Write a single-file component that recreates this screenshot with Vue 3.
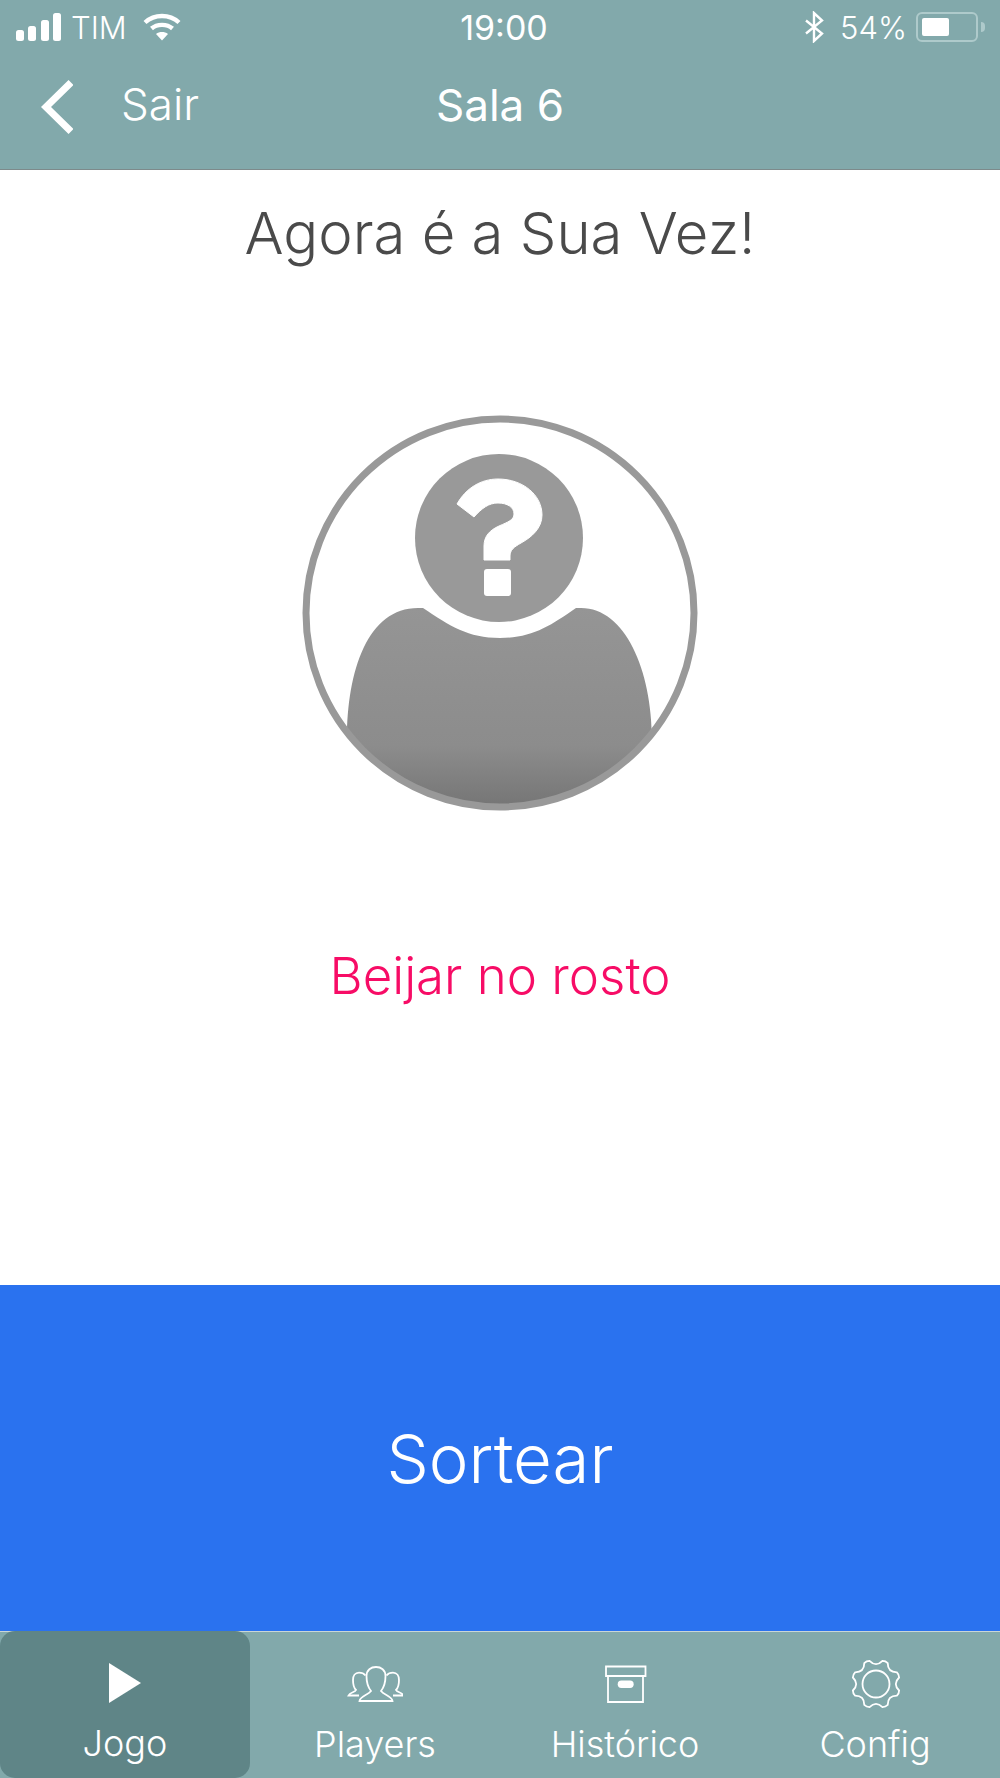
<template>
  <div class="screen">
    <header class="top">
      <div class="status">
        <div class="status__left">
          <svg class="signal" width="46" height="28" viewBox="0 0 46 28" fill="#fff">
            <rect x="0" y="17" width="8" height="11" rx="2.5" />
            <rect x="12" y="13" width="8" height="15" rx="2.5" />
            <rect x="25" y="7" width="8" height="21" rx="2.5" />
            <rect x="37" y="0" width="8" height="28" rx="2.5" />
          </svg>
          <span class="carrier">TIM</span>
          <svg class="wifi" width="38" height="28" viewBox="0 0 38 28" fill="none" stroke="#fff" stroke-width="4.4">
            <path d="M2 9.5C11.5 .8 26.5 .8 36 9.5" />
            <path d="M8.5 15.5C14 10.6 24 10.6 29.5 15.5" />
            <path d="M13 21L19 27.5 25 21C21.5 18.4 16.5 18.4 13 21Z" fill="#fff" stroke="none" />
          </svg>
        </div>
        <span class="time">19:00</span>
        <div class="status__right">
          <svg class="bt" width="20" height="32" viewBox="0 0 20 32" fill="none" stroke="#fff" stroke-width="2.4">
            <path d="M2 9.5L18 22.5 10 30V2L18 9.5 2 22.5" />
          </svg>
          <span class="battery-text">54%</span>
          <div class="battery">
            <div class="battery__fill" :style="{ width: battery + '%' }"></div>
          </div>
          <div class="battery__tip"></div>
        </div>
      </div>
      <div class="nav">
        <div class="nav__back">
          <svg width="34" height="64" viewBox="0 0 34 64" fill="none" stroke="#fff" stroke-width="7">
            <path d="M32 10.5L7 35 32 59.5" />
          </svg>
          <span>Sair</span>
        </div>
        <h1>Sala 6</h1>
      </div>
    </header>

    <main class="game">
      <h2>Agora é a Sua Vez!</h2>
      <svg class="avatar" width="420" height="420" viewBox="0 0 420 420">
        <defs>
          <linearGradient id="bodyFill" x1="0" y1="208" x2="0" y2="405" gradientUnits="userSpaceOnUse">
            <stop offset="0" stop-color="#959595" />
            <stop offset="0.7" stop-color="#8c8c8c" />
            <stop offset="1" stop-color="#767676" />
          </linearGradient>
          <clipPath id="ring"><circle cx="210" cy="213" r="195" /></clipPath>
        </defs>
        <g clip-path="url(#ring)">
          <path
            d="M57 340C57 270 78 208 128 208H133C160 226 178 238 210 238C242 238 260 226 286 208H291C335 208 362 270 362 340V420H57Z"
            fill="url(#bodyFill)"
          />
        </g>
        <circle cx="210" cy="213" r="194" fill="none" stroke="#999" stroke-width="7" />
        <circle cx="209" cy="138" r="84" fill="#999" />
        <path
          d="M167 104C176 88 191 79 208 79C233 79 252 95 252 115C252 128 242 137 231 143C224 147 220 150 220 156V160H194V146C194 136 200 130 209 126C218 122 224 120 224 114C224 107 217 103 208 103C199 103 192 108 184 117Z"
          fill="#fff"
          stroke="#fff"
          stroke-width="1"
          stroke-linejoin="round"
        />
        <rect x="194" y="169" width="27" height="27" rx="3" fill="#fff" />
      </svg>
      <p class="prompt">Beijar no rosto</p>
    </main>

    <button class="draw">Sortear</button>

    <nav class="tabs">
      <div v-for="tab in tabs" :key="tab.label" class="tab" :class="{ 'tab--on': tab.active }">
        <svg width="56" height="56" viewBox="0 0 56 56" fill="none" stroke="#fff" stroke-width="1.8">
          <template v-if="tab.icon === 'play'">
            <path d="M12 11L44 31 12 51Z" fill="#fff" stroke="none" />
          </template>
          <template v-else-if="tab.icon === 'players'">
            <path d="M12.5 48C13 43 21 42 24 38C20 33 19.5 28 19.5 23C19.5 17 24 14 29 14C34 14 38.5 17 38.5 23C38.5 28 38 33 34 38C37 42 45 43 45.5 48Z" />
            <path d="M18.5 22.5C17 20.7 15 19.7 12 19.7C8 19.7 6 23 6 27C6 31 7 35 9 37C8 39.5 3 39 1.5 42.5H12M39.5 22.5C41 20.7 43 19.7 46 19.7C50 19.7 52 23 52 27C52 31 51 35 49 37C50 39.5 55 39 56.5 42.5H46" />
          </template>
          <template v-else-if="tab.icon === 'archive'">
            <path d="M9 13.5H48.5V23H9ZM11 23H46V49H11Z" />
            <rect x="20.7" y="27.5" width="16" height="7.5" rx="3.7" fill="#fff" stroke="none" />
          </template>
          <template v-else>
            <path :d="gearPath" />
            <circle cx="29" cy="31" r="13.5" />
          </template>
        </svg>
        <span>{{ tab.label }}</span>
      </div>
    </nav>
  </div>
</template>

<script setup>
const battery = 54

const tabs = [
  { label: 'Jogo', icon: 'play', active: true },
  { label: 'Players', icon: 'players' },
  { label: 'Histórico', icon: 'archive' },
  { label: 'Config', icon: 'gear' }
]

// 8 teeth, built around the centre so the arcs stay even
const gearPath = (() => {
  const pts = []
  const n = 8
  const step = Math.PI / n
  const p = (r, t) => `${(29 + r * Math.cos(t)).toFixed(1)} ${(31 + r * Math.sin(t)).toFixed(1)}`
  for (let i = 0; i < n; i++) {
    const a = (i / n) * Math.PI * 2 - Math.PI / 2 + step
    pts.push(`${i === 0 ? 'M' : 'L'}${p(24, a - step * 0.3)}`)
    pts.push(`Q${p(25, a)} ${p(24, a + step * 0.3)}`)
    pts.push(`Q${p(16.5, a + step)} ${p(24, a + step * 1.7)}`)
  }
  return pts.join(' ') + 'Z'
})()
</script>

<style scoped>
.screen {
  width: 1000px;
  height: 1778px;
  display: flex;
  flex-direction: column;
  background: #fff;
  overflow: hidden;
  font-family: Inter, "Liberation Sans", sans-serif;
  color: #fff;
}

.top {
  height: 170px;
  box-sizing: border-box;
  flex: none;
  background: #82a9ab;
  border-bottom: 1px solid #7d8a8b;
}

.status {
  height: 54px;
  padding: 0 0 0 16px;
  display: grid;
  grid-template-columns: 1fr auto 1fr;
  align-items: center;
  font-size: 31px;
  font-weight: 300;
}

.status__left {
  display: flex;
  align-items: center;
}

.carrier {
  margin-left: 9px;
}

.wifi {
  margin-left: 16px;
}

.time {
  font-size: 34px;
  font-weight: 400;
  margin-right: 8px;
}

.status__right {
  display: flex;
  align-items: center;
  justify-content: flex-end;
  padding-right: 15px;
}

.battery-text {
  margin-left: 16px;
}

.battery {
  width: 62px;
  height: 30px;
  margin-left: 9px;
  padding: 4px;
  box-sizing: border-box;
  border: 2px solid #aecacb;
  border-radius: 6px;
}

.battery__fill {
  height: 100%;
  background: #fff;
  border-radius: 2px;
}

.battery__tip {
  width: 4px;
  height: 10px;
  margin-left: 3px;
  background: #aecacb;
  border-radius: 0 4px 4px 0;
}

.nav {
  position: relative;
  height: 116px;
  display: flex;
  align-items: flex-start;
  justify-content: center;
}

.nav h1 {
  margin: 26px 0 0;
  font-size: 44px;
  line-height: 50px;
  font-weight: 400;
}

.nav__back {
  position: absolute;
  left: 39px;
  top: 18px;
  display: flex;
  align-items: center;
  gap: 48px;
  font-size: 44px;
  font-weight: 300;
}

.game {
  flex: 1;
  display: flex;
  flex-direction: column;
  align-items: center;
}

.game h2 {
  margin: 26px 0 0;
  font-size: 58px;
  line-height: 74px;
  font-weight: 300;
  color: #4a4a4a;
}

.avatar {
  display: block;
  margin-top: 130px;
}

.prompt {
  margin: 126px 0 0;
  font-size: 51px;
  line-height: 60px;
  font-weight: 300;
  color: #f70c66;
}

.draw {
  flex: none;
  height: 346px;
  width: 100%;
  padding: 0;
  border: 0;
  background: #2a72ef;
  color: #fff;
  font: 300 67px Inter, "Liberation Sans", sans-serif;
}

.tabs {
  flex: none;
  height: 147px;
  box-sizing: border-box;
  display: grid;
  grid-template-columns: repeat(4, 1fr);
  background: #82a9ab;
  border-top: 1px solid #c9d6d7;
}

.tab {
  display: flex;
  flex-direction: column;
  align-items: center;
  padding-top: 21px;
  font-size: 36px;
  font-weight: 300;
  border-radius: 15px;
}

.tab svg {
  display: block;
}

.tab span {
  margin-top: 13px;
  line-height: 44px;
}

.tab--on {
  margin-top: -1px;
  background: #5f8587;
}
</style>
